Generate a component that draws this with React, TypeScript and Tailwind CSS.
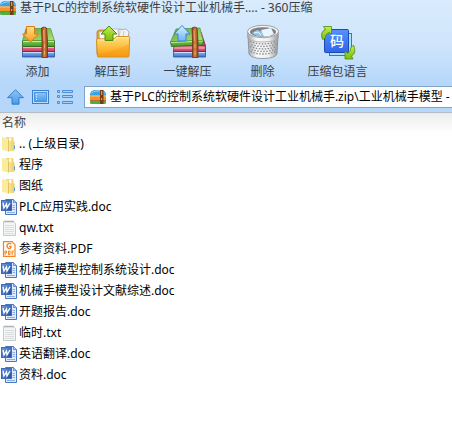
import type { ReactNode } from 'react';

type FileKind = 'folder' | 'doc' | 'txt' | 'pdf';

interface FileEntry {
  name: string;
  kind: FileKind;
}

const files: FileEntry[] = [
  { name: '.. (上级目录)', kind: 'folder' },
  { name: '程序', kind: 'folder' },
  { name: '图纸', kind: 'folder' },
  { name: 'PLC应用实践.doc', kind: 'doc' },
  { name: 'qw.txt', kind: 'txt' },
  { name: '参考资料.PDF', kind: 'pdf' },
  { name: '机械手模型控制系统设计.doc', kind: 'doc' },
  { name: '机械手模型设计文献综述.doc', kind: 'doc' },
  { name: '开题报告.doc', kind: 'doc' },
  { name: '临时.txt', kind: 'txt' },
  { name: '英语翻译.doc', kind: 'doc' },
  { name: '资料.doc', kind: 'doc' },
];

// Gradients shared by every icon on the page
function IconDefs() {
  return (
    <svg className="absolute h-0 w-0" aria-hidden="true">
      <defs>
        <linearGradient id="gold" x1="0" y1="0" x2="0" y2="1">
          <stop offset="0" stopColor="#ffe28a" />
          <stop offset="1" stopColor="#fb9a1c" />
        </linearGradient>
        <linearGradient id="folderFront" x1="0" y1="0" x2="0" y2="1">
          <stop offset="0" stopColor="#ffe07c" />
          <stop offset="0.6" stopColor="#fdb835" />
          <stop offset="1" stopColor="#f79a15" />
        </linearGradient>
        <linearGradient id="lid" x1="0" y1="0" x2="1" y2="1">
          <stop offset="0" stopColor="#5ba53a" />
          <stop offset="1" stopColor="#b4e47e" />
        </linearGradient>
        <linearGradient id="green" x1="0" y1="0" x2="0" y2="1">
          <stop offset="0" stopColor="#7cc94a" />
          <stop offset="1" stopColor="#3f9a2c" />
        </linearGradient>
        <linearGradient id="pink" x1="0" y1="0" x2="0" y2="1">
          <stop offset="0" stopColor="#f07c99" />
          <stop offset="1" stopColor="#c43a60" />
        </linearGradient>
        <linearGradient id="blue" x1="0" y1="0" x2="0" y2="1">
          <stop offset="0" stopColor="#8dbcf6" />
          <stop offset="1" stopColor="#3c74d0" />
        </linearGradient>
        <linearGradient id="strap" x1="0" y1="0" x2="1" y2="0">
          <stop offset="0" stopColor="#8a431a" />
          <stop offset="0.5" stopColor="#d48245" />
          <stop offset="1" stopColor="#8c431a" />
        </linearGradient>
        <linearGradient id="lime" x1="0" y1="0" x2="0" y2="1">
          <stop offset="0" stopColor="#c8ee4a" />
          <stop offset="1" stopColor="#79bd0c" />
        </linearGradient>
        <linearGradient id="sky" x1="0" y1="0" x2="0" y2="1">
          <stop offset="0" stopColor="#d8f0ff" />
          <stop offset="1" stopColor="#6cb5f8" />
        </linearGradient>
        <linearGradient id="metal" x1="0" y1="0" x2="1" y2="0">
          <stop offset="0" stopColor="#a2a4a6" />
          <stop offset="0.3" stopColor="#fafafa" />
          <stop offset="0.7" stopColor="#eeeeee" />
          <stop offset="1" stopColor="#96989a" />
        </linearGradient>
        <linearGradient id="codeTile" x1="0" y1="0" x2="0" y2="1">
          <stop offset="0" stopColor="#5591fa" />
          <stop offset="1" stopColor="#2f66ea" />
        </linearGradient>
        <linearGradient id="navBlue" x1="0" y1="0" x2="0" y2="1">
          <stop offset="0" stopColor="#8cc6fa" />
          <stop offset="1" stopColor="#4a98ea" />
        </linearGradient>
        <linearGradient id="folderYellow" x1="0" y1="0" x2="1" y2="0">
          <stop offset="0" stopColor="#fbeb9e" />
          <stop offset="1" stopColor="#e8cb62" />
        </linearGradient>
        <linearGradient id="docBlue" x1="0" y1="0" x2="1" y2="1">
          <stop offset="0" stopColor="#6f9fe4" />
          <stop offset="1" stopColor="#1d489f" />
        </linearGradient>
      </defs>
    </svg>
  );
}

function AddIcon() {
  return (
    <svg width="36" height="36" viewBox="0 0 36 36" aria-hidden="true">
      <path d="M2.500 27.500h32v5.500h-32z" fill="url(#blue)" stroke="#2c4f96" strokeWidth=".8" />
      <path d="M3 28.500h31" stroke="#c5dfff" />
      <path d="M2.500 22.500h32v5h-32z" fill="url(#pink)" stroke="#8b1b3b" strokeWidth=".8" />
      <path d="M3 23.500h31" stroke="#fab3c5" />
      <path d="M6 4.500h24.500L34.500 17H2.500z" fill="url(#lid)" stroke="#5b9a3b" strokeWidth=".8" />
      <path d="M2.500 17h32v5.500h-32z" fill="url(#green)" stroke="#2d6d1c" strokeWidth=".8" />
      <path d="M3 17.500h31" stroke="#c4f099" />
      <path d="M21.500 4q2.500-2 5 0l1 13v16.500h-5.500V17z" fill="url(#strap)" stroke="#6f3210" strokeWidth=".8" />
      <path d="M23.500 6l.5 11M24.500 20v4M24.500 27v4" stroke="#f0b06c" strokeWidth=".8" />
      <path d="M6.500 2.500h8v7.500h4L10.500 18l-8-8h4z" fill="url(#gold)" stroke="#d77d16" />
    </svg>
  );
}

function ExtractToIcon() {
  return (
    <svg width="36" height="36" viewBox="0 0 36 36" aria-hidden="true">
      <path d="M2 7.500l2-1.500h7l2 2h20v22H2z" fill="#e9a42f" stroke="#b97813" strokeWidth=".8" />
      <path d="M4 8l11-2 2 14H5z" fill="#f8f8f8" stroke="#a6a6a6" strokeWidth=".7" />
      <path d="M16 5h10l3 3v12H16z" fill="#fff" stroke="#aaa" strokeWidth=".7" />
      <path d="M23 6l8-1 3 3-2 12h-8z" fill="#f2f2f2" stroke="#999" strokeWidth=".7" />
      <path d="M25 7l-1 8M29 7l-1 8" stroke="#bdbdbd" strokeWidth=".8" />
      <path d="M1.500 16q0-1.200 1.200-1.200H19l2.500-2.300h12q1.300 0 1.200 1.200L34 32q0 1-1 1H3.500q-1 0-1.100-1z" fill="url(#folderFront)" stroke="#d48a16" strokeWidth=".9" />
      <path d="M2.800 16H19.500l2.500-2.300h11.500" stroke="#fff0b1" strokeWidth=".9" fill="none" />
      <path d="M3 30Q20 27 34 20l-.5 12H3z" fill="#ef8f0a" opacity=".28" />
      <path d="M14 2l8 8h-4v6.500h-8V10H6z" fill="url(#lime)" stroke="#4f8d0c" />
    </svg>
  );
}

function OneClickIcon() {
  return (
    <svg width="36" height="36" viewBox="0 0 36 36" aria-hidden="true">
      <path d="M31 8l5 15v4h-6z" fill="#cf4468" stroke="#86203c" strokeWidth=".7" />
      <path d="M3.500 27.500h32v5.500h-32z" fill="url(#blue)" stroke="#2c4f96" strokeWidth=".8" />
      <path d="M4 28.500h31" stroke="#c5dfff" />
      <path d="M4 21.500h31l.5 6h-32z" fill="url(#pink)" stroke="#8b1b3b" strokeWidth=".8" />
      <path d="M4 24h31" stroke="#fab3c5" />
      <path d="M6 5l24-1 3 12.500L.500 18z" fill="url(#lid)" stroke="#5b9a3b" strokeWidth=".8" />
      <path d="M.500 18L33 16.500v4.500L1.500 22.500z" fill="url(#green)" stroke="#2d6d1c" strokeWidth=".8" />
      <path d="M1 18.500l32-1.500" stroke="#c4f099" />
      <path d="M22 4q2.500-2 5 0l1 13v16.500h-5.500V17z" fill="url(#strap)" stroke="#6f3210" strokeWidth=".8" />
      <path d="M24 6l.5 11M25 20v4M25 27v4" stroke="#f0b06c" strokeWidth=".8" />
      <path d="M12 1.500l8 8.500h-4v7H8v-7H4z" fill="url(#sky)" stroke="#3d83d2" />
    </svg>
  );
}

function DeleteIcon() {
  return (
    <svg width="36" height="36" viewBox="0 0 36 36" aria-hidden="true">
      <path d="M3 12l1 18q2 4.500 14 4.500T32 30l1-18z" fill="url(#metal)" stroke="#85888a" strokeWidth=".8" />
      <g fill="none" stroke="#85888b" strokeWidth="1.300" strokeDasharray="1.500 1.500">
        <path d="M5 17.500q13 5 26 0" />
        <path d="M5 20q13 5 26 0" strokeDashoffset="1.500" />
        <path d="M5 22.500q13 5 26 0" />
        <path d="M5 25q13 5 26 0" strokeDashoffset="1.500" />
        <path d="M5.500 27.500q12.500 5 25 0" />
      </g>
      <path d="M2.500 8v5q2 5 15.500 5t15.500-5V8z" fill="url(#metal)" stroke="#a4a7a9" strokeWidth=".8" />
      <ellipse cx="18" cy="7.500" rx="15.500" ry="6.200" fill="#f3f3f3" stroke="#8e9193" strokeWidth=".8" />
      <ellipse cx="18" cy="8" rx="13" ry="4.800" fill="#7d8185" />
      <path d="M7 9l5-3 6 2 1 4.500q-8 0-12-3.500z" fill="#8dcaf0" />
      <path d="M16 6l10-2 3 6q-4 2.500-10 2.600z" fill="#e8f5ff" />
      <path d="M9 9l4-1 3 3" stroke="#e3f5ff" fill="none" />
    </svg>
  );
}

function LanguageIcon() {
  return (
    <svg width="36" height="36" viewBox="0 0 36 36" aria-hidden="true">
      <rect x="9.500" y="9.500" width="22" height="22" fill="#a8e6fc" stroke="#1685cf" />
      <rect x="4.500" y="5.500" width="24" height="23" rx="1" fill="url(#codeTile)" stroke="#1c49b7" />
      <text x="17" y="22" textAnchor="middle" fontSize="14" fontWeight="500" fill="#fff" fontFamily="Noto Sans CJK SC, sans-serif">码</text>
      <path d="M2.500 15.500Q-.5 8 5.500 5.500L3.500 2.500h8V10.500L9.500 8.500Q5 10 5.500 14z" fill="url(#lime)" stroke="#4f8d0c" strokeWidth=".8" />
      <path d="M33.500 21q3.500 8-2 11l1.500 3H25v-8l2.500 2.500Q31 28 30.500 24z" fill="url(#lime)" stroke="#4f8d0c" strokeWidth=".8" />
    </svg>
  );
}

function ArchiveIcon() {
  return (
    <svg width="16" height="16" viewBox="0 0 16 16" className="shrink-0" aria-hidden="true">
      <path d="M0 7V5q1-4 5-4h6q4 0 5 4v2z" fill="#38a3e5" />
      <path d="M1.500 4.500Q3 2 6 2h4q3 0 4.500 2.500" stroke="#93d8fb" fill="none" />
      <path d="M0 6.500h16V11H0z" fill="#f6922c" />
      <path d="M0 7h16" stroke="#ffc46b" />
      <path d="M0 11h16v2.500q0 1.500-1.500 1.500h-13Q0 15 0 13.500z" fill="#4fb03f" />
      <path d="M0 11.500h16" stroke="#d9532b" strokeWidth=".7" />
      <path d="M10 1h3.500v14H10z" fill="#7a3b17" />
      <path d="M11.700 2v4M11.700 9v2" stroke="#e9b36c" />
    </svg>
  );
}

function FileIcon({ kind }: { kind: FileKind }) {
  if (kind === 'folder') {
    return (
      <svg width="16" height="16" viewBox="0 0 16 16" aria-hidden="true">
        <path d="M5 1h6.500l1 1v12.500H5z" fill="#eed37a" />
        <path d="M8 1.500h2.500v4H8z" fill="#fffbe0" />
        <path d="M7 5l6.500.5v9L7 15.500z" fill="url(#folderYellow)" />
        <path d="M1 1.500q0-.5.5-.5l5 1.500q1 .3 1 1.200v11.800L1.500 14Q1 14 1 13.500z" fill="#faeb9f" />
        <path d="M7.500 4v11.500" stroke="#d9bb55" strokeWidth=".8" />
        <path d="M13.500 9.500v3.500" stroke="#5e9bd0" />
      </svg>
    );
  }
  if (kind === 'doc') {
    return (
      <svg width="16" height="16" viewBox="0 0 16 16" aria-hidden="true">
        <path d="M4.500.5h8l3 3v12h-11z" fill="#dfebfc" stroke="#4a76bd" />
        <path d="M12.500.5v3h3" fill="#a7c2ec" stroke="#4a76bd" strokeWidth=".7" />
        <path d="M11.500 6.500h2.500M11.500 8.500h2.500M11.500 10.500h2.500M6 13.500h8" stroke="#8fb0e6" />
        <rect x=".5" y="1.500" width="10" height="10" fill="url(#docBlue)" stroke="#3f6cb8" />
        <path d="M2 4l1 5 2.500-4 .5 4 3-5" stroke="#fff" strokeWidth="1.400" fill="none" />
      </svg>
    );
  }
  if (kind === 'txt') {
    return (
      <svg width="16" height="16" viewBox="0 0 16 16" aria-hidden="true">
        <path d="M2.500 1.500h10l2 2v12h-12z" fill="#f4f6f6" stroke="#b8bdc0" strokeWidth=".8" />
        <path d="M4 .5v2M6 .5v2M8 .5v2M10 .5v2M12 .5v2" stroke="#8f9598" strokeWidth=".8" />
        <path d="M4 5.500h9M4 7.500h9M4 9.500h9M4 11.500h9M4 13.500h9" stroke="#d2d7da" strokeWidth=".8" />
      </svg>
    );
  }
  return (
    <svg width="16" height="16" viewBox="0 0 16 16" aria-hidden="true">
      <path d="M2.500 15.300V.7h8.500l3 3v11.600z" fill="#fff" stroke="#f5841f" strokeWidth="1.200" />
      <path d="M10.500 3Q8 1.500 6.500 3.500T7.500 7.500Q10 8 10 5.500H8" stroke="#f5841f" strokeWidth="1.300" fill="none" />
      <path d="M4 14v-4h1.500v2H4M7.500 10v3.500H9V10zM11 14v-4h2M11 12h1.500" stroke="#f5841f" fill="none" />
    </svg>
  );
}

function ToolbarButton({ label, children }: { label: string; children: ReactNode }) {
  return (
    <button type="button" className="flex w-[75px] shrink-0 flex-col items-center gap-1 text-[#3a3f45]">
      {children}
      <span className="leading-4 whitespace-nowrap">{label}</span>
    </button>
  );
}

function AddressBar() {
  return (
    <div className="flex items-center gap-2 py-1 pl-[7px]">
      <button type="button" aria-label="向上">
        <svg width="17" height="16" viewBox="0 0 17 16" aria-hidden="true">
          <path d="M8.500.700l8 8h-4.500v6.500H5V8.700H.500z" fill="url(#navBlue)" stroke="#2e78c8" strokeWidth=".9" />
        </svg>
      </button>
      <button type="button" aria-label="预览">
        <svg width="17" height="16" viewBox="0 0 17 16" aria-hidden="true">
          <rect x=".5" y="1.500" width="16" height="13" fill="#b9dcfd" stroke="#3a80cc" />
          <rect x="2.500" y="3.500" width="12" height="9" fill="url(#navBlue)" stroke="#4a94e2" />
          <path d="M4.500 5v1M4.500 7.500v1M4.500 10v1" stroke="#e5f3ff" />
        </svg>
      </button>
      <button type="button" aria-label="列表">
        <svg width="17" height="16" viewBox="0 0 17 16" fill="#a9d3fb" stroke="#4a8ed6" aria-hidden="true">
          <path d="M.500 1.500h2v2h-2zM5.500 1.500h10v2h-10zM.500 6.500h2v2h-2zM5.500 6.500h10v2h-10zM.500 12.500h2v2h-2zM5.500 12.500h10v2h-10z" />
        </svg>
      </button>
      <label className="ml-[2px] flex h-[22px] min-w-0 flex-1 items-center gap-1 border border-r-0 border-[#7fa3c8] bg-white pl-[5px]">
        <ArchiveIcon />
        <input
          type="text"
          aria-label="地址"
          defaultValue="基于PLC的控制系统软硬件设计工业机械手.zip\工业机械手模型 - "
          className="min-w-0 flex-1 bg-transparent text-black outline-none"
        />
      </label>
    </div>
  );
}

export default function App() {
  return (
    <div className="min-h-screen bg-white font-['Noto_Sans','Noto_Sans_CJK_SC',sans-serif] text-[12px] leading-4 text-black">
      <IconDefs />

      <header className="border-b border-[#b5bcc4] bg-linear-to-b from-[#d9ebfd] via-[#cfe5fc] via-40% to-[#b5d7fa] to-75%">
        <h1 className="flex items-center gap-1 overflow-hidden whitespace-nowrap text-[#3a3f45]">
          <ArchiveIcon />
          基于PLC的控制系统软硬件设计工业机械手.... - 360压缩
        </h1>

        <nav className="flex overflow-hidden pt-2 pb-[2px]" aria-label="工具栏">
          <ToolbarButton label="添加"><AddIcon /></ToolbarButton>
          <ToolbarButton label="解压到"><ExtractToIcon /></ToolbarButton>
          <ToolbarButton label="一键解压"><OneClickIcon /></ToolbarButton>
          <ToolbarButton label="删除"><DeleteIcon /></ToolbarButton>
          <ToolbarButton label="压缩包语言"><LanguageIcon /></ToolbarButton>
        </nav>

        <AddressBar />
      </header>

      <table className="w-full border-collapse text-left">
        <thead className="bg-linear-to-b from-[#ececec] to-white">
          <tr>
            <th scope="col" className="h-[20px] pl-[2px] font-normal text-[#444444]">名称</th>
          </tr>
        </thead>
        <tbody>
          {files.map((file) => (
            <tr key={file.name}>
              <td className="h-[21px] p-0">
                <span className="flex items-center gap-[2px] pl-px whitespace-nowrap">
                  <FileIcon kind={file.kind} />
                  {file.name}
                </span>
              </td>
            </tr>
          ))}
        </tbody>
      </table>
    </div>
  );
}
